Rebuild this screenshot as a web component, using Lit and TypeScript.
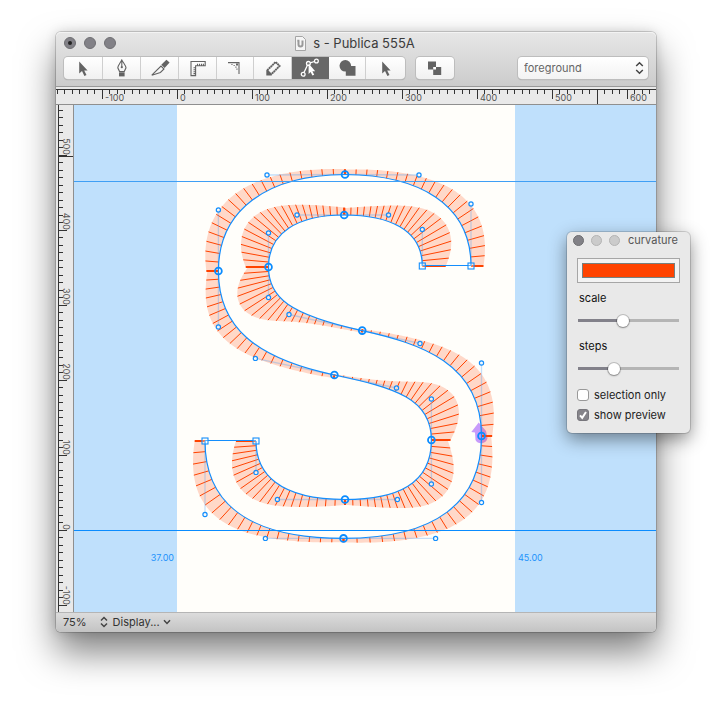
import { LitElement, html, svg, css } from "lit";
import { customElement, state } from "lit/decorators.js";

type Pt = [number, number];

// Window-space origin of the drawing area.
const ORIGIN_X = 74;
const ORIGIN_Y = 105;

// Curve segments of the glyph: start, two handles, end.
const CURVES: Pt[][] = [
  [[471, 266], [471, 204], [419, 175], [345, 174.5]],
  [[345, 174.5], [267, 175], [218.4, 210], [218.4, 271]],
  [[218.4, 271], [218.4, 327], [255.4, 358.4], [334.4, 375]],
  [[334.4, 375], [396.5, 388], [431.4, 399], [431.4, 440]],
  [[431.4, 440], [431.4, 484], [397.4, 499.5], [345, 499.5]],
  [[345, 499.5], [277.4, 499.5], [256, 472.4], [256, 441]],
  [[205, 441], [205, 514.5], [265.4, 538.4], [343.5, 538.4]],
  [[343.5, 538.4], [435.6, 538.4], [481.5, 502.5], [481.5, 436]],
  [[481.5, 436], [481.5, 363], [420, 343.5], [362.2, 330.6]],
  [[362.2, 330.6], [289, 314.5], [268.5, 297.5], [268.5, 267]],
  [[268.5, 267], [268.5, 233], [297, 215], [344.2, 215]],
  [[344.2, 215], [388.5, 215], [422.3, 229.5], [422.3, 266]],
];
const SMOOTH: Pt[] = CURVES.filter((_, i) => i !== 0 && i !== 6).map((c) => c[0]);
const CORNERS: Pt[] = [[471, 266], [422.3, 266], [256, 441], [205, 441]];

function comb(curve: Pt[], t: number, scale: number): [Pt, Pt] {
  const [a, b, c, d] = curve;
  const u = 1 - t;
  const at = (i: 0 | 1) =>
    u * u * u * a[i] + 3 * u * u * t * b[i] + 3 * u * t * t * c[i] + t * t * t * d[i];
  const d1 = (i: 0 | 1) =>
    3 * u * u * (b[i] - a[i]) + 6 * u * t * (c[i] - b[i]) + 3 * t * t * (d[i] - c[i]);
  const d2 = (i: 0 | 1) => 6 * u * (c[i] - 2 * b[i] + a[i]) + 6 * t * (d[i] - 2 * c[i] + b[i]);
  const vx = d1(0), vy = d1(1);
  const len = Math.hypot(vx, vy);
  const k = (vx * d2(1) - vy * d2(0)) / (len * len * len);
  const x = at(0), y = at(1);
  return [[x, y], [x + (vy / len) * k * scale, y - (vx / len) * k * scale]];
}

const arrow = svg`<path d="M6.2 3.4V15.6L9 13L11.4 18L13.5 17L11.2 12.4H14.6Z"/>`;
const TOOLS = [
  { name: "Edit", cls: "w39", art: arrow },
  {
    name: "Pen", cls: "w38",
    art: svg`<path class="line" d="M9.8 2C8.2 5 6 7.5 5.8 9.8L7.6 13.6H12.2L14 9.8C13.8 7.5 11.5 5 9.8 2ZM9.8 3V8.5"/>
      <circle cx="9.8" cy="9.2" r="1.1"/><rect x="7" y="14.4" width="5.6" height="4"/>`,
  },
  {
    name: "Knife", cls: "w38",
    art: svg`<path class="line" d="M1.8 17.2L11 8L14 11L10.4 14.4Z"/>
      <path d="M11.3 6.8L16.4 1.8L19.6 4.4L14.6 9.9Z"/>`,
  },
  {
    name: "Measure", cls: "w38",
    art: svg`<path class="line" d="M3 3.5H17.2V7.8H7.6V17.6H3ZM9.5 7.5V5.7M11.5 7.5V5.7M13.5 7.5V5.7M15.4 7.5V5.7M7.4 9.7H5.5M7.4 11.7H5.5M7.4 13.7H5.5M7.4 15.6H5.5"/>`,
  },
  {
    name: "Scale", cls: "w37",
    art: svg`<path class="line" d="M3 4.6H14V16"/>
      <path d="M6.4 6h1.1v1.1h-1.1zM8.6 7h1.1v1.1h-1.1zM10.4 8.6h1.1v1.1h-1.1zM11.4 10.6h1.1v1.1h-1.1zM11 5.6h2v2h-2z"/>`,
  },
  {
    name: "Draw", cls: "w38",
    art: svg`<path class="dots" d="M4.2 12.4L12.6 4L16.6 8L8.2 16.4"/>
      <path d="M3.3 12H5L8.8 15.8V17.4H3.3Z"/>`,
  },
  {
    name: "Curvature", cls: "w37 on",
    art: svg`<path class="line" d="M4 14.6L7.4 7.2M10.2 4.8L14.4 3.5"/>
      <circle class="line" cx="3.2" cy="16.2" r="1.9"/><circle class="line" cx="8.4" cy="5.4" r="1.9"/>
      <circle class="line" cx="16.4" cy="3" r="1.9"/>
      <path d="M8.6 5.6V16L10.6 14L12.4 17.6L14.2 16.7L12.4 13.2H15.2Z"/>`,
  },
  {
    name: "Shapes", cls: "w37",
    art: svg`<circle cx="8.3" cy="7.8" r="5.8"/><path d="M8.8 8H18.5V17.8H8.8Z"/>`,
  },
  { name: "Select", cls: "w39", art: arrow },
];

@customElement("color-panel")
class ColorPanel extends LitElement {
  @state() scale = 1385;
  @state() steps = 20;

  static styles = css`
    :host {
      display: block;
      box-sizing: border-box;
      width: 123px;
      padding: 0 10px 8px;
      border-radius: 5px;
      background: #e9e9e9;
      box-shadow: 0 0 0 1px rgba(0, 0, 0, 0.14), 0 6px 18px rgba(0, 0, 0, 0.45);
      font: 11px/16px Inter, sans-serif;
      color: #111;
    }
    .bar { display: flex; align-items: center; height: 16px; margin: 0 -4px 10px; gap: 7px; }
    .dot { box-sizing: border-box; width: 11px; height: 11px; border-radius: 50%; border: 1px solid #b4b4b4; background: #cbcbcb; }
    .dot.close { background: #828187; border-color: #6d6d70; }
    .name { margin-left: 1px; color: #555; }
    .well {
      display: block; box-sizing: border-box; width: 103px; height: 25px; padding: 4px;
      border: 1px solid #a6a6a6; border-radius: 0; background: #f3f3f3; appearance: none;
    }
    .well::-webkit-color-swatch-wrapper { padding: 0; }
    .well::-webkit-color-swatch { border: 1px solid #76807f; border-radius: 0; }
    .field { display: block; margin: 7px 2px 0; }
    .slider {
      --fill: 0%;
      display: block; appearance: none; width: 101px; height: 17px; margin: 6px 1px 0;
      background: linear-gradient(90deg, #82818a var(--fill), #b5b5b5 0) center / 100% 3px no-repeat;
    }
    .slider::-webkit-slider-thumb {
      appearance: none; width: 12px; height: 12px; border-radius: 50%; background: #fff;
      box-shadow: 0 0 0 1px rgba(0, 0, 0, 0.18), 0 1px 2px rgba(0, 0, 0, 0.3);
    }
    .steps { margin-top: 9px; }
    .check { display: flex; align-items: center; gap: 5px; height: 20px; white-space: nowrap; color: #222; }
    .first { margin-top: 8px; }
    .box {
      appearance: none; box-sizing: border-box; flex: none; width: 12px; height: 12px; margin: 0;
      border: 1px solid #999; border-radius: 3px; background: #fff;
    }
    .mark { display: grid; }
    .mark > * { grid-area: 1 / 1; }
    .tick { width: 12px; height: 12px; fill: none; stroke: #fff; stroke-width: 2; visibility: hidden; pointer-events: none; }
    .box:checked { background: #85848a; border-color: #77767c; }
    .box:checked + .tick { visibility: visible; }
  `;

  private changed() {
    this.dispatchEvent(new CustomEvent("comb", { detail: { scale: this.scale, steps: this.steps } }));
  }

  private check(label: string, on: boolean, cls: string) {
    return html`<label class="check ${cls}">
      <span class="mark"><input class="box" type="checkbox" ?checked=${on} />
        <svg class="tick" viewBox="0 0 12 12"><path d="M3 6.4L5.2 8.8L9 3" /></svg></span>${label}</label>`;
  }

  render() {
    return html`
      <div class="bar">
        <span class="dot close"></span><span class="dot"></span><span class="dot"></span>
        <span class="name">curvature</span>
      </div>
      <input class="well" type="color" value="#ff4300" aria-label="Comb color" />
      <label class="field" for="scale">scale</label>
      <input id="scale" class="slider" type="range" min="0" max="3200" .value=${String(this.scale)}
        style="--fill:${this.scale / 32}%"
        @input=${(e: Event) => { this.scale = +(e.target as HTMLInputElement).value; this.changed(); }} />
      <label class="field steps" for="steps">steps</label>
      <input id="steps" class="slider" type="range" min="0" max="60" .value=${String(this.steps)}
        style="--fill:${this.steps / 0.6}%"
        @input=${(e: Event) => { this.steps = Math.max(1, +(e.target as HTMLInputElement).value); this.changed(); }} />
      ${this.check("selection only", false, "first")}
      ${this.check("show preview", true, "")}
    `;
  }
}

@customElement("glyph-canvas")
class GlyphCanvas extends LitElement {
  static properties = { scale: { type: Number }, steps: { type: Number } };
  declare scale: number;
  declare steps: number;

  static styles = css`
    :host { display: block; flex: 1; min-width: 0; height: 507px; }
    .area { display: block; width: 100%; height: 100%; background: #bfe0fc; font: 9px Inter, sans-serif; }
    .page { fill: #fffefa; }
    .edge { fill: #0a8cff; }
    .cap { fill: #3f9ff5; }
    .value { fill: #1e93fb; }
    .end { text-anchor: end; }
    .shade { fill: #ff4300; fill-opacity: 0.2; }
    .tooth { stroke: #ff4300; stroke-width: 1; }
    .strong { stroke: #ff4300; stroke-width: 2; }
    .outline { fill: none; stroke: #148efc; stroke-width: 1.2; }
    .handle { stroke: #4a9ff5; stroke-opacity: 0.32; stroke-width: 1.3; }
    .ctrl { fill: #fffefa; fill-opacity: 0.7; stroke: #148efc; stroke-width: 1.2; }
    .node { fill: none; stroke: #0a8cff; stroke-width: 1.8; }
    .corner { fill: #fffefa; fill-opacity: 0.3; stroke: #148efc; stroke-width: 1.1; }
    .start { fill: #c79bfb; }
  `;

  private teeth(curve: Pt[]) {
    const n = this.steps;
    const fine: Pt[] = [];
    for (let i = 0; i <= 60; i++) fine.push(comb(curve, i / 60, this.scale)[1]);
    const [a, b, c, d] = curve;
    const rows = Array.from({ length: n + 1 }, (_, i) => comb(curve, i / n, this.scale));
    return svg`
      <path class="shade" d="M${a}C${b} ${c} ${d}L${fine.reverse().join(" ")}Z" />
      ${rows.map(([p, q], i) => svg`<line class=${i === 0 || i === n ? "strong" : "tooth"}
        x1=${p[0]} y1=${p[1]} x2=${q[0]} y2=${q[1]} />`)}`;
  }

  render() {
    return html`<svg class="area" role="img" aria-label="Glyph s">
      <rect class="page" x="103" width="338" height="100%" />
      <text class="value end" x="100" y="456">37.00</text>
      <text class="value" x="444" y="456">45.00</text>
      <g transform="translate(${-ORIGIN_X} ${-ORIGIN_Y})">
        <path class="start" d="M478.7 422.5L486 431L487.5 438A6.5 6.5 0 0 1 475.5 440L475 432.5L471.3 432Z" />
        ${CURVES.map((c) => this.teeth(c))}
        ${CURVES.map(([a, b, c, d]) => svg`
          <line class="handle" x1=${a[0]} y1=${a[1]} x2=${b[0]} y2=${b[1]} />
          <line class="handle" x1=${c[0]} y1=${c[1]} x2=${d[0]} y2=${d[1]} />
          <path class="outline" d="M${a}C${b} ${c} ${d}" />`)}
        <path class="outline" d="M422 265.5H471M256 440.5H205" />
        ${CURVES.map(([, b, c]) => svg`
          <circle class="ctrl" cx=${b[0]} cy=${b[1]} r="2.1" /><circle class="ctrl" cx=${c[0]} cy=${c[1]} r="2.1" />`)}
        ${SMOOTH.map(([x, y]) => svg`<circle class="node" cx=${x} cy=${y} r="3.4" />`)}
        ${CORNERS.map(([x, y]) => svg`<rect class="corner" x=${x - 3} y=${y - 3} width="6" height="6" />`)}
      </g>
      <rect class="cap" y="76" width="100%" height="1" />
      <rect class="edge" y="425" width="100%" height="1" />
    </svg>`;
  }
}

@customElement("app-root")
class AppRoot extends LitElement {
  @state() scale = 1385;
  @state() steps = 20;
  @state() rulerWidth = 600;

  private watcher = new ResizeObserver(() => {
    this.rulerWidth = this.clientWidth - 112;
  });

  connectedCallback() {
    super.connectedCallback();
    this.watcher.observe(this);
  }

  disconnectedCallback() {
    super.disconnectedCallback();
    this.watcher.disconnect();
  }

  static styles = css`
    :host {
      display: block; position: relative; box-sizing: border-box; padding: 32px 56px 80px;
      background: #fff; font: 11px/16px Inter, sans-serif; color: #333; overflow: hidden;
    }
    .window {
      border-radius: 5px; background: #e9e9e9;
      box-shadow: 0 0 0 1px rgba(0, 0, 0, 0.16), 0 20px 36px rgba(0, 0, 0, 0.5), 0 0 12px rgba(0, 0, 0, 0.15);
    }
    .head {
      box-sizing: border-box; height: 55px; border-radius: 5px 5px 0 0; border-bottom: 1px solid #999;
      background: linear-gradient(#e7e7e7, #cccccc); box-shadow: inset 0 1px #f3f3f3;
    }
    .title { display: grid; grid-template-columns: 1fr auto 1fr; align-items: center; height: 25px; padding: 0 10px 0 8px; }
    .dots { display: flex; gap: 8px; margin-top: -3px; }
    .dot { box-sizing: border-box; display: grid; place-items: center; width: 12px; height: 12px; border: 1px solid #6f6f73; border-radius: 50%; background: #828187; }
    .dot.dirty::after { content: ""; width: 4px; height: 4px; border-radius: 50%; background: #222; }
    .name { display: flex; align-items: center; gap: 7px; margin: -3px 0 0; font-size: 13px; font-weight: 400; color: #3b3b3b; }
    .doc { width: 11px; height: 15px; }
    .sheet { fill: #f5f5f5; stroke: #a5a5a5; }
    .u { fill: none; stroke: #999; stroke-width: 2; }
    .tools { display: flex; align-items: center; gap: 11px; padding: 0 8px; }
    .group { display: flex; border-radius: 4px; background: linear-gradient(#fff, #f1f1f1); box-shadow: 0 0 0 1px #bdbdbd, 0 1px 1px #999; overflow: hidden; }
    .tool {
      display: grid; place-items: center; flex: none; box-sizing: border-box; height: 22px; padding: 0; margin: 0;
      border: 0; border-right: 1px solid #cfcfcf; background: none; fill: #636363; stroke: none;
    }
    .tool:last-child { border-right: 0; }
    .w39 { width: 39px; } .w38 { width: 38px; } .w37 { width: 37px; }
    .on { background: #686868; fill: #fff; border-color: #686868; }
    .tool svg { width: 20px; height: 20px; }
    .line { fill: none; stroke: #636363; stroke-width: 1.1; }
    .tool .dots { fill: none; stroke: #636363; stroke-width: 1.9; stroke-dasharray: 2 0.4; }
    .on .line { stroke: #fff; stroke-width: 1.3; }
    .hole { fill: #fff; }
    .layer { position: relative; margin-left: auto; }
    .pick {
      appearance: none; display: block; box-sizing: border-box; width: 130px; height: 22px; padding: 0 6px; margin: 0;
      border: 0; border-radius: 4px; background: linear-gradient(#fff, #f3f3f3); box-shadow: 0 0 0 1px #bdbdbd, 0 1px 1px #999;
      font: 11px/22px Inter, sans-serif; color: #666;
    }
    .updown { position: absolute; right: 4px; top: 4px; width: 9px; height: 14px; pointer-events: none; }
    .chev { fill: none; stroke: #444; stroke-width: 1.5; }
    .ruler { display: block; fill: #333; shape-rendering: crispEdges; font: 9px Inter, sans-serif; }
    .across { width: 100%; height: 18px; }
    .down { flex: none; width: 18px; height: 507px; }
    .rule { fill: #8f8f8f; }
    .label { fill: #555; }
    .end { text-anchor: end; }
    .work { display: flex; }
    .foot {
      display: flex; align-items: center; box-sizing: border-box; height: 20px; padding: 0 7px 2px;
      border-top: 1px solid #b5b5b5; border-radius: 0 0 5px 5px; background: linear-gradient(#dcdcdc, #c3c3c3);
    }
    .zoom, .show { display: flex; align-items: center; padding: 0; border: 0; background: none; font: 11px/16px Inter, sans-serif; color: #333; }
    .zoom { gap: 13px; margin-right: 5px; }
    .show { gap: 3px; }
    .mini { width: 8px; height: 12px; }
    .caret { width: 8px; height: 6px; }
    .panel { position: absolute; top: 232px; right: 22px; }
  `;

  private across() {
    const zero = 121;
    const width = this.rulerWidth;
    const count = Math.max(0, Math.ceil((width - zero) / 7.5)) + 16;
    const ticks = Array.from({ length: count }, (_, i) => i - 16);
    return html`<svg class="ruler across" aria-hidden="true">
      <rect y="2" width="100%" height="1" /><rect class="rule" y="17" width="100%" height="1" />
      ${ticks.map((i) => {
        const x = Math.floor(zero + i * 7.5);
        if (i % 10 !== 0) return svg`<rect x=${x} y="2" width="1" height="5" />`;
        return svg`<rect x=${x} y="2" width="1" height="10" />
          ${x + 24 < width ? svg`<text class="label" x=${x + 3} y="14">${i * 10}</text>` : ""}`;
      })}
      <rect x="541" y="2" width="1" height="15" />
    </svg>`;
  }

  private down() {
    const zero = 425;
    const ticks = Array.from({ length: 67 }, (_, i) => i - 10);
    return html`<svg class="ruler down" aria-hidden="true">
      <rect x="2" width="1" height="100%" /><rect class="rule" x="17" width="1" height="100%" />
      ${ticks.map((i) => {
        const y = Math.floor(zero - i * 7.5);
        return i % 10 === 0
          ? svg`<rect x="2" y=${y} width="9" height="1" />
              <text class="label end" transform="translate(7 ${y}) rotate(90)">${i * 10}</text>`
          : svg`<rect x="2" y=${y} width="5" height="1" />`;
      })}
      <rect x="2" y="51" width="15" height="1" />
    </svg>`;
  }

  render() {
    return html`
      <main class="window">
        <header class="head">
          <div class="title">
            <div class="dots"><span class="dot dirty"></span><span class="dot"></span><span class="dot"></span></div>
            <h1 class="name">
              <svg class="doc" viewBox="0 0 11 15"><path class="sheet" d="M0.5 0.5H7.5L10.5 3.5V14.5H0.5Z" />
                <path class="u" d="M3.5 4.5V8.5Q3.5 10.5 5.5 10.5Q7.5 10.5 7.5 8.5V4.5M2.3 4.8H4.4" /></svg>
              s - Publica 555A
            </h1>
          </div>
          <div class="tools">
            <div class="group">
              ${TOOLS.map((t) => html`<button class="tool ${t.cls}" aria-label=${t.name}>
                <svg viewBox="0 0 20 20">${t.art}</svg></button>`)}
            </div>
            <div class="group">
              <button class="tool w38" aria-label="Remove overlap">
                <svg viewBox="0 0 20 20"><path d="M3 3.5H11V11.5H3ZM8.2 9H16.2V17H8.2Z" />
                  <path class="hole" d="M8.2 9H11V11.5H8.2Z" /></svg>
              </button>
            </div>
            <div class="layer">
              <select class="pick" aria-label="Layer"><option>foreground</option></select>
              <svg class="updown" viewBox="0 0 9 14"><path class="chev" d="M1.2 5L4.5 1.8L7.8 5M1.2 9L4.5 12.2L7.8 9" /></svg>
            </div>
          </div>
        </header>
        ${this.across()}
        <div class="work">
          ${this.down()}
          <glyph-canvas .scale=${this.scale} .steps=${this.steps}></glyph-canvas>
        </div>
        <footer class="foot">
          <button class="zoom">75%
            <svg class="mini" viewBox="0 0 8 12"><path class="chev" d="M1 4.5L4 1.5L7 4.5M1 7.5L4 10.5L7 7.5" /></svg></button>
          <button class="show">Display...
            <svg class="caret" viewBox="0 0 8 6"><path class="chev" d="M1 1.2L4 4.4L7 1.2" /></svg></button>
        </footer>
      </main>
      <color-panel class="panel"
        @comb=${(e: CustomEvent) => { this.scale = e.detail.scale; this.steps = e.detail.steps; }}></color-panel>
    `;
  }
}
